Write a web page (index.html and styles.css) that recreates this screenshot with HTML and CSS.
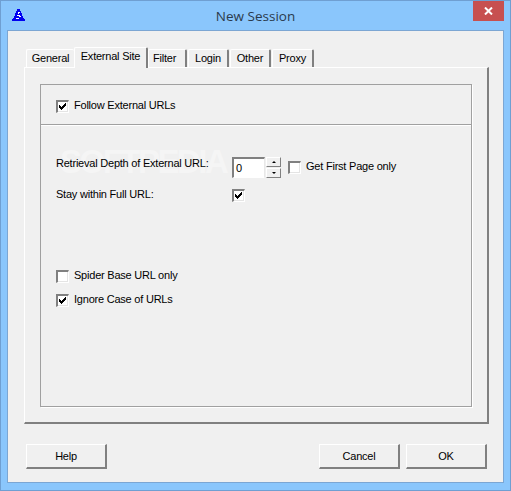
FILE: index.html
```html
<!DOCTYPE html>
<html lang="en">
<head>
  <meta charset="UTF-8">
  <title>New Session</title>
  <link rel="stylesheet" href="styles.css">
</head>
<body>
  <div class="window">
    <div class="titlebar">
      <svg class="app-icon" width="13" height="12" viewBox="0 0 13 12" shape-rendering="crispEdges">
        <path d="M5 0h3v2h1v2h1v3h1v2h1v1h1v2h-13v-2h1v-1h1v-2h1v-3h1v-2h1z" fill="#0000f0"/>
        <path d="M6 3h2v1h-1v1h-1zM5 6h3v1h1v1h-2v-1h-2zM4 9h3v1h-3z" fill="#fff"/>
      </svg>
      <div class="title">New Session</div>
      <div class="close">
        <svg width="9" height="8" viewBox="0 0 9 8"><path d="M1 0.5 L8 7.5 M8 0.5 L1 7.5" stroke="#fff" stroke-width="2"/></svg>
      </div>
    </div>

    <div class="client">
      <div class="tabs">
        <div class="tab tab-general">General</div>
        <div class="tab tab-active">External Site</div>
        <div class="tab tab-filter">Filter</div>
        <div class="tab tab-login">Login</div>
        <div class="tab tab-other">Other</div>
        <div class="tab tab-proxy">Proxy</div>
      </div>

      <div class="panel">
        <div class="group">
          <div class="group-head">
            <label class="check-row">
              <span class="check"><svg class="tick" width="7" height="7" viewBox="0 0 7 7" shape-rendering="crispEdges"><path d="M0 2h1v1h1v1h1v-1h1v-1h1v-1h1v-1h1v3h-1v1h-1v1h-1v1h-1v1h-1v-1h-1v-1h-1z"/></svg></span>
              Follow External URLs
            </label>
          </div>
          <div class="watermark">SOFTPEDIA</div>
          <div class="group-body">
            <div class="row row-depth">
              <span class="label">Retrieval Depth of External URL:</span>
              <span class="spin-input">0</span>
              <span class="spin">
                <span class="spin-btn"><i class="arrow up"></i></span>
                <span class="spin-btn"><i class="arrow down"></i></span>
              </span>
              <label class="check-row first-page"><span class="check"></span>Get First Page only</label>
            </div>
            <div class="row row-stay">
              <span class="label">Stay within Full URL:</span>
              <span class="check"><svg class="tick" width="7" height="7" viewBox="0 0 7 7" shape-rendering="crispEdges"><path d="M0 2h1v1h1v1h1v-1h1v-1h1v-1h1v-1h1v3h-1v1h-1v1h-1v1h-1v1h-1v-1h-1v-1h-1z"/></svg></span>
            </div>
            <label class="check-row spider"><span class="check"></span>Spider Base URL only</label>
            <label class="check-row ignore">
              <span class="check"><svg class="tick" width="7" height="7" viewBox="0 0 7 7" shape-rendering="crispEdges"><path d="M0 2h1v1h1v1h1v-1h1v-1h1v-1h1v-1h1v3h-1v1h-1v1h-1v1h-1v1h-1v-1h-1v-1h-1z"/></svg></span>
              Ignore Case of URLs
            </label>
          </div>
        </div>
      </div>

      <div class="buttons">
        <button class="btn">Help</button>
        <span class="spacer"></span>
        <button class="btn">Cancel</button>
        <button class="btn">OK</button>
      </div>
    </div>
  </div>
</body>
</html>
```

FILE: styles.css
```css
* {
  box-sizing: border-box;
}

html, body {
  margin: 0;
  height: 100%;
  overflow: hidden;
}

body {
  font-family: "Liberation Sans", Arial, sans-serif;
  font-size: 11px;
  letter-spacing: -0.22px;
  color: #000;
  background: #8ac6fc;
}

.window {
  width: 511px;
  height: 491px;
  padding: 0 7px 7px 7px;
  background: #8ac6fc;
  border: 1px solid #6f9fd2;
  display: flex;
  flex-direction: column;
}

.titlebar {
  height: 29px;
  margin: 0 -6px;
  padding-left: 10px;
  display: flex;
  align-items: flex-start;
  position: relative;
}

.app-icon {
  margin-top: 8px;
}

.title {
  position: absolute;
  left: 0;
  right: 0;
  top: 6px;
  text-align: center;
  font-family: "Open Sans", "Noto Sans", sans-serif;
  font-size: 13.5px;
  letter-spacing: 0;
  line-height: 18px;
  color: #2a3a4c;
}

.close {
  position: absolute;
  right: 5px;
  top: 0;
  width: 31px;
  height: 20px;
  background: #c75050;
  display: flex;
  align-items: center;
  justify-content: center;
}

.client {
  flex: 1;
  margin: 0 -1px;
  border: 1px solid #7ca6d3;
  background: #f0f0f0;
  padding: 17px 15px 0 16px;
  display: flex;
  flex-direction: column;
}

/* tabs */
.tabs {
  display: flex;
  height: 20px;
  padding-left: 2px;
  align-items: flex-end;
  position: relative;
  z-index: 1;
  margin-bottom: -1px;
}

.tab {
  height: 18px;
  padding-top: 2px;
  text-align: center;
  line-height: 13px;
  background: #f0f0f0;
  border-top: 1px solid #fff;
  border-left: 1px solid #fff;
  border-right: 2px solid #808080;
  border-top-left-radius: 2px;
  border-top-right-radius: 2px;
  margin-bottom: 1px;
}

.tab-general {
  width: 48px;
  border-right: none;
}

.tab-active {
  width: 74px;
  height: 21px;
  padding-top: 2px;
  margin-bottom: 0;
  position: relative;
  z-index: 2;
}

.tab-filter {
  width: 39px;
  text-align: left;
  padding-left: 4px;
  margin-right: 1px;
}

.tab-login {
  width: 41px;
  margin-right: 1px;
}

.tab-other {
  width: 41px;
  margin-right: 1px;
}

.tab-proxy {
  width: 42px;
}

.panel {
  width: 465px;
  height: 357px;
  background: #f0f0f0;
  border-top: 1px solid #fff;
  border-left: 1px solid #fff;
  border-right: 2px solid #808080;
  border-bottom: 2px solid #808080;
  padding: 16px 15px 15px 15px;
}

/* inner group */
.group {
  position: relative;
  height: 323px;
  border: 1px solid #a0a0a0;
  box-shadow: 1px 1px 0 #fff;
}

.group-head {
  height: 40px;
  padding: 15px 0 0 15px;
  border-bottom: 1px solid #a0a0a0;
  box-shadow: 0 1px 0 #fff;
}

.group-body {
  padding: 32px 0 0 15px;
  position: relative;
  z-index: 1;
}

.check-row {
  display: flex;
  align-items: flex-start;
  height: 13px;
  line-height: 11px;
}

.check {
  flex: none;
  width: 13px;
  height: 13px;
  margin-right: 5px;
  background: #fff;
  border-top: 2px solid #808080;
  border-left: 2px solid #808080;
  border-right: 1px solid #fff;
  border-bottom: 1px solid #fff;
  box-shadow: inset -1px -1px 0 #e4e4e4;
  position: relative;
}

.tick {
  position: absolute;
  left: 1px;
  top: 1px;
  display: block;
}

.row {
  display: flex;
  align-items: flex-start;
}

.label {
  width: 176px;
  flex: none;
}

.row-depth {
  height: 21px;
}

.row-depth .label {
  line-height: 13px;
}

.spin-input {
  width: 33px;
  height: 21px;
  background: #fff;
  padding: 3px 0 0 2px;
  line-height: 13px;
  border-top: 2px solid #808080;
  border-left: 2px solid #808080;
  border-right: 1px solid #e8e8e8;
  border-bottom: 1px solid #fff;
}

.spin {
  width: 15px;
  height: 21px;
  margin-left: 1px;
  display: flex;
  flex-direction: column;
  gap: 1px;
}

.spin-btn {
  flex: 1;
  background: #f0f0f0;
  border-top: 1px solid #fff;
  border-left: 1px solid #fff;
  border-right: 1px solid #808080;
  border-bottom: 1px solid #808080;
  display: flex;
  align-items: center;
  justify-content: center;
}

.arrow {
  width: 0;
  height: 0;
  border-left: 2px solid transparent;
  border-right: 2px solid transparent;
}

.arrow.up {
  border-bottom: 2px solid #000;
}

.arrow.down {
  border-top: 2px solid #000;
}

.first-page {
  margin: 4px 0 0 7px;
}

.row-stay {
  margin-top: 11px;
  height: 13px;
  line-height: 11px;
}

.spider {
  margin-top: 68px;
}

.ignore {
  margin-top: 11px;
}

.watermark {
  position: absolute;
  left: 19px;
  top: 54px;
  font-size: 33px;
  line-height: 46px;
  font-weight: bold;
  letter-spacing: -2.5px;
  color: #f5f5f5;
  white-space: nowrap;
}

/* bottom buttons */
.buttons {
  display: flex;
  gap: 6px;
  margin-top: 20px;
  padding: 0 1px 0 2px;
}

.spacer {
  flex: 1;
}

.btn {
  width: 81px;
  height: 25px;
  padding: 0;
  font: inherit;
  letter-spacing: inherit;
  color: #000;
  background: #f0f0f0;
  border-top: 1px solid #fff;
  border-left: 1px solid #fff;
  border-right: 2px solid #808080;
  border-bottom: 2px solid #808080;
  border-radius: 0;
}
```
